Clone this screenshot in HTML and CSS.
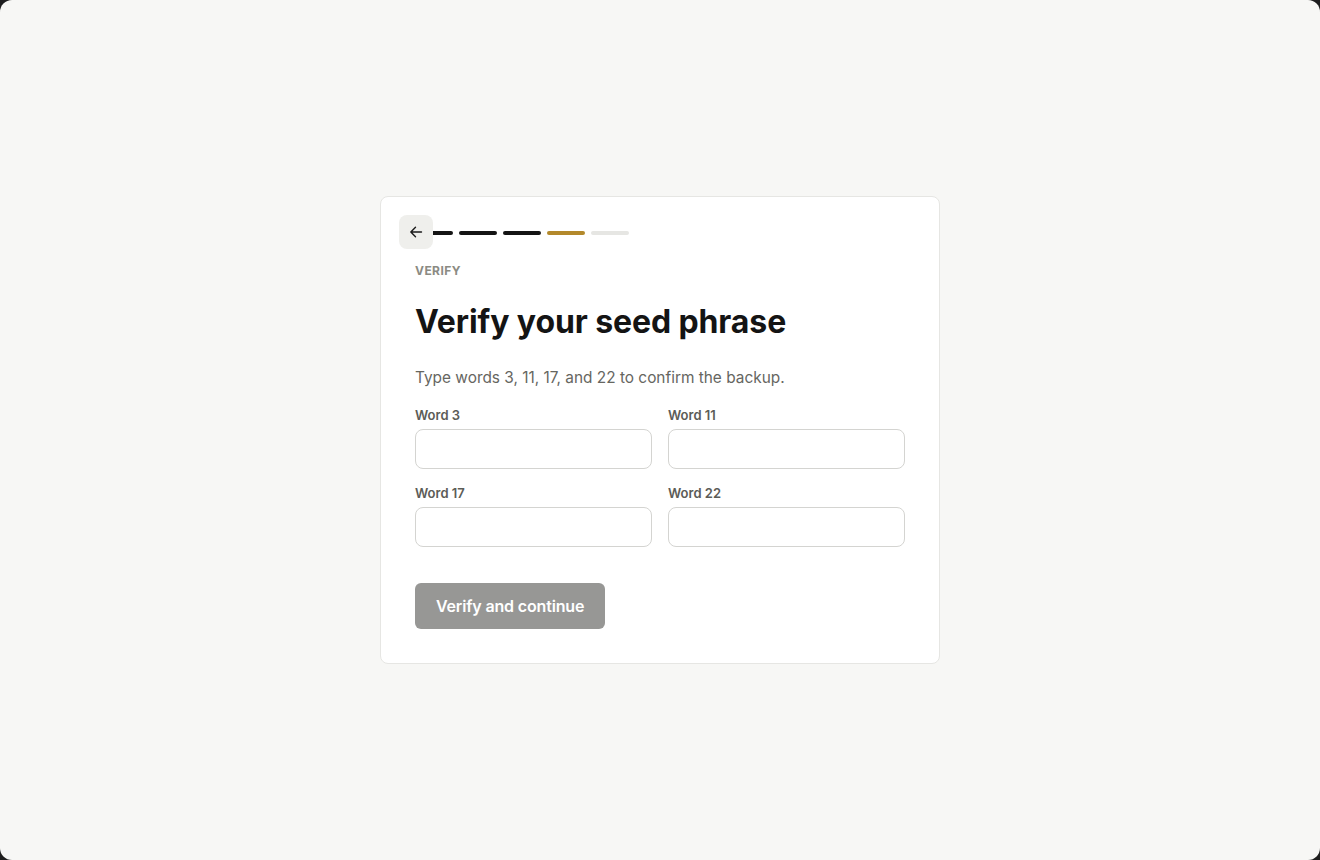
FILE: index.html
```html
<!DOCTYPE html>
<html lang="en">
<head>
<meta charset="utf-8">
<title>Verify your seed phrase</title>
<link rel="stylesheet" href="styles.css">
</head>
<body>
<main class="page">
  <section class="card">
    <button class="back" aria-label="Back">
      <svg width="14" height="14" viewBox="0 0 14 14" fill="none" stroke="#1a1a1a" stroke-width="1.4" stroke-linecap="round" stroke-linejoin="round"><path d="M12.5 7H1.8M6.5 2.3L1.8 7L6.5 11.7"/></svg>
    </button>
    <div class="progress">
      <span class="step done"></span>
      <span class="step done"></span>
      <span class="step done"></span>
      <span class="step current"></span>
      <span class="step"></span>
    </div>
    <div class="eyebrow">VERIFY</div>
    <h1 class="title">Verify your seed phrase</h1>
    <p class="lead">Type words 3, 11, 17, and 22 to confirm the backup.</p>
    <div class="fields">
      <label class="field"><span class="field-label">Word 3</span><input class="input" type="text"></label>
      <label class="field"><span class="field-label">Word 11</span><input class="input" type="text"></label>
      <label class="field"><span class="field-label">Word 17</span><input class="input" type="text"></label>
      <label class="field"><span class="field-label">Word 22</span><input class="input" type="text"></label>
    </div>
    <button class="primary" disabled>Verify and continue</button>
  </section>
</main>
</body>
</html>
```

FILE: styles.css
```css
html {
  background: #1e1e1e;
}
body {
  margin: 0;
  font-family: Inter, "Noto Sans", sans-serif;
}
.page {
  height: 860px;
  background: #f7f7f5;
  border-radius: 12px;
  display: flex;
  align-items: flex-start;
  justify-content: center;
  padding-top: 196px;
  box-sizing: border-box;
}
.card {
  position: relative;
  width: 560px;
  box-sizing: border-box;
  background: #ffffff;
  border: 1px solid #e6e6e3;
  border-radius: 8px;
  padding: 34px;
}
.back {
  position: absolute;
  left: 18px;
  top: 18px;
  width: 34px;
  height: 34px;
  border: none;
  border-radius: 8px;
  background: #efefec;
  display: flex;
  align-items: center;
  justify-content: center;
  padding: 0;
  cursor: pointer;
}
.progress {
  display: flex;
  gap: 6px;
  height: 4px;
}
.step {
  width: 38px;
  height: 4px;
  border-radius: 2px;
  background: #e6e6e3;
}
.step.done {
  background: #141414;
}
.step.current {
  background: #b3892b;
}
.eyebrow {
  margin-top: 28px;
  font-size: 12px;
  line-height: 16px;
  font-weight: 700;
  letter-spacing: 0.035em;
  color: #8b8b83;
}
.title {
  margin: 23px 0 0;
  font-size: 32px;
  line-height: 40px;
  font-weight: 700;
  letter-spacing: -0.1px;
  color: #141414;
}
.lead {
  margin: 25px 0 0;
  font-size: 15.4px;
  line-height: 22px;
  color: #66665f;
}
.fields {
  margin-top: 18px;
  display: grid;
  grid-template-columns: minmax(0, 1fr) minmax(0, 1fr);
  column-gap: 16px;
  row-gap: 16px;
}
.field {
  display: flex;
  flex-direction: column;
  min-width: 0;
}
.field-label {
  font-size: 13px;
  line-height: 16px;
  font-weight: 600;
  color: #5c5c57;
  margin-bottom: 6px;
}
.input {
  width: 100%;
  height: 40px;
  box-sizing: border-box;
  border: 1px solid #d4d4d1;
  border-radius: 8px;
  background: #fff;
  font-family: inherit;
  font-size: 15px;
  padding: 0 12px;
}
.primary {
  display: block;
  margin-top: 36px;
  height: 46px;
  padding: 0 21px;
  border: none;
  border-radius: 6px;
  background: #979795;
  color: #ffffff;
  font-family: inherit;
  font-size: 16px;
  font-weight: 600;
  letter-spacing: -0.01em;
}
```
